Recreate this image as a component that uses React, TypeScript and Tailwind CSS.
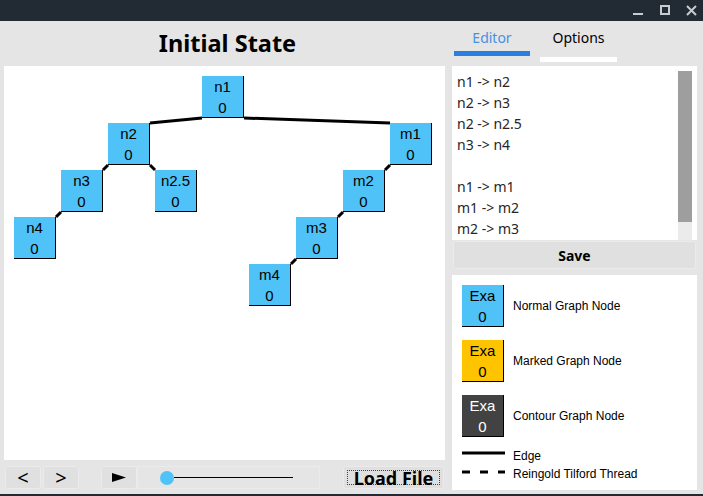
import React from "react";

type GraphNode = { id: string; x: number; y: number };

// node positions inside the canvas (top-left corner)
const nodes: GraphNode[] = [
  { id: "n1", x: 198, y: 10 },
  { id: "n2", x: 104, y: 57 },
  { id: "m1", x: 386, y: 57 },
  { id: "n3", x: 57, y: 104 },
  { id: "n2.5", x: 151, y: 104 },
  { id: "m2", x: 339, y: 104 },
  { id: "n4", x: 10, y: 151 },
  { id: "m3", x: 292, y: 151 },
  { id: "m4", x: 245, y: 198 },
];

// edges corner to corner
const edges = [
  [198, 52, 146, 57],
  [240, 52, 386, 57],
  [104, 99, 99, 104],
  [146, 99, 151, 104],
  [57, 146, 52, 151],
  [386, 99, 381, 104],
  [339, 146, 334, 151],
  [292, 193, 287, 198],
];

const editorLines = ["n1 -> n2", "n2 -> n3", "n2 -> n2.5", "n3 -> n4", "", "n1 -> m1", "m1 -> m2", "m2 -> m3"];

const NodeBox = ({ label, className }: { label: string; className: string }) => (
  <div
    className={
      "w-[42px] h-[42px] box-border border-r border-b border-black flex flex-col items-center font-['Liberation_Sans',sans-serif] text-[15px] leading-[21px] " +
      className
    }
  >
    <span>{label}</span>
    <span>0</span>
  </div>
);

const LegendRow = ({ label, className }: { label: string; className: string }) => (
  <div className="flex items-center gap-[9px]">
    <NodeBox label="Exa" className={className} />
    <span className="text-[12px] text-black font-['Liberation_Sans',sans-serif]">{label}</span>
  </div>
);

export default function App() {
  return (
    <div className="w-[703px] h-[496px] bg-[#e5e5e5] flex flex-col overflow-hidden font-['Noto_Sans',sans-serif]">
      {/* Title bar */}
      <div className="h-[21px] bg-[#222b33] flex items-center justify-end gap-[16px] pr-[6px] shrink-0">
        <svg width="11" height="11" viewBox="0 0 11 11">
          <rect x="0" y="8" width="10" height="2" fill="#c6ccd1" />
        </svg>
        <svg width="10" height="11" viewBox="0 0 10 11">
          <rect x="1" y="1" width="8" height="8" fill="none" stroke="#c6ccd1" strokeWidth="2" />
        </svg>
        <svg width="11" height="11" viewBox="0 0 11 11">
          <path d="M1 1 L10 10 M10 1 L1 10" stroke="#c6ccd1" strokeWidth="2" />
        </svg>
      </div>

      <div className="flex flex-1 min-h-0">
        {/* Left column */}
        <div className="w-[449px] flex flex-col px-[4px]">
          <div className="h-[45px] flex items-center justify-center text-[23.5px] font-bold text-black pl-[6px]">Initial State</div>
          <div className="h-[394px] bg-white relative">
            <svg className="absolute inset-0" width="441" height="394">
              {edges.map((e, i) => (
                <line key={i} x1={e[0]} y1={e[1]} x2={e[2]} y2={e[3]} stroke="black" strokeWidth="3" />
              ))}
            </svg>
            {nodes.map((n) => (
              <div key={n.id} className="absolute" style={{ left: n.x, top: n.y }}>
                <NodeBox label={n.id} className="bg-[#4fc3f7] text-black" />
              </div>
            ))}
          </div>
          {/* Toolbar */}
          <div className="flex items-center mt-[6px] h-[23px]">
            <button className="w-[36px] h-[23px] ml-[1px] bg-[#e0e0e0] border border-[#ebebeb] rounded-[3px] text-[20px] leading-none flex items-center justify-center">
              &lt;
            </button>
            <button className="w-[36px] h-[23px] ml-[2px] bg-[#e0e0e0] border border-[#ebebeb] rounded-[3px] text-[20px] leading-none flex items-center justify-center">
              &gt;
            </button>
            <button className="w-[36px] h-[23px] ml-[22px] bg-[#e0e0e0] border border-[#ebebeb] rounded-[3px] flex items-center justify-center">
              <svg width="14" height="9" viewBox="0 0 14 9">
                <polygon points="0,0 14,4.5 0,9" fill="black" />
              </svg>
            </button>
            <div className="w-[183px] h-[23px] border border-[#ebebeb] relative flex items-center">
              <div className="ml-[36px] w-[119px] h-px bg-black" />
              <div className="absolute left-[22px] top-[4px] w-[14px] h-[14px] rounded-full bg-[#4fc3f7]" />
            </div>
            <button className="ml-auto mr-[1px] w-[101px] h-[23px] bg-[#e0e0e0] border border-[#ebebeb] rounded-[3px] flex items-center justify-center p-[3px]">
              <span className="w-full h-full border border-dotted border-[#444] flex items-center justify-center text-[18px] font-bold leading-none text-black">
                Load File
              </span>
            </button>
          </div>
        </div>

        {/* Right column */}
        <div className="flex-1 flex flex-col pl-[3px] pr-[6px]">
          <div className="h-[45px] flex items-start gap-[10px] pl-[2px]">
            <div className="w-[76px] flex flex-col items-center">
              <span className="text-[14px] text-[#4a90e2] leading-[20px] mt-[7px]">Editor</span>
              <div className="w-full h-[5px] bg-[#2a7de1] mt-[3px]" />
            </div>
            <div className="w-[77px] flex flex-col items-center">
              <span className="text-[14px] text-black leading-[20px] mt-[7px]">Options</span>
              <div className="w-full h-[5px] bg-white mt-[9px]" />
            </div>
          </div>

          {/* Editor */}
          <div className="h-[174px] bg-white flex">
            <div className="flex-1 pl-[5px] pt-[5px] text-[14px] leading-[21px] text-[#262626] overflow-hidden">
              {editorLines.map((l, i) => (
                <div key={i} className="h-[21px]">
                  {l}
                </div>
              ))}
            </div>
            <div className="w-[14px] mr-[5px] mt-[5px] flex flex-col">
              <div className="h-[151px] bg-[#9e9e9e]" />
              <div className="flex-1 bg-[#ebebeb]" />
            </div>
          </div>

          <button className="mt-px mx-px h-[28px] bg-[#e0e0e0] border border-[#ebebeb] rounded-[3px] text-[14px] font-bold text-black">
            Save
          </button>

          {/* Legend */}
          <div className="mt-[6px] h-[215px] bg-white pl-[10px] pt-[10px] flex flex-col">
            <div className="flex flex-col gap-[13px]">
              <LegendRow label="Normal Graph Node" className="bg-[#4fc3f7] text-black" />
              <LegendRow label="Marked Graph Node" className="bg-[#ffc400] text-black" />
              <LegendRow label="Contour Graph Node" className="bg-[#424242] text-white" />
            </div>
            <div className="mt-[9px] flex items-start gap-[8px] h-[18px] font-['Liberation_Sans',sans-serif] text-[12px]">
              <svg width="43" height="6" viewBox="0 0 43 6" className="mt-[5px]">
                <line x1="0" y1="2" x2="43" y2="2" stroke="black" strokeWidth="3" />
              </svg>
              <span className="leading-[14px] mt-[3px]">Edge</span>
            </div>
            <div className="flex items-start gap-[8px] h-[18px] font-['Liberation_Sans',sans-serif] text-[12px]">
              <svg width="43" height="6" viewBox="0 0 43 6" className="mt-[5px]">
                <line x1="0" y1="3" x2="43" y2="3" stroke="black" strokeWidth="3" strokeDasharray="8 10" />
              </svg>
              <span className="leading-[14px] mt-[3px]">Reingold Tilford Thread</span>
            </div>
          </div>
        </div>
      </div>
      <div className="h-[2px] bg-[#222b33] shrink-0" />
    </div>
  );
}
